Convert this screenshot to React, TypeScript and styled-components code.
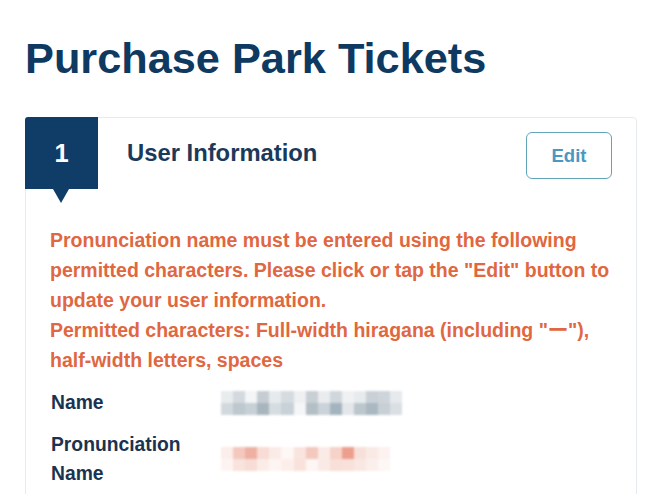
import React from "react";
import styled, { createGlobalStyle } from "styled-components";

const GlobalStyle = createGlobalStyle`
  html, body {
    margin: 0;
    padding: 0;
    background: #ffffff;
  }
  body {
    font-family: "Liberation Sans", Arial, sans-serif;
  }
`;

// blurred (pixelated) stand-ins for the hidden personal values
const nameCells = [
  ["#e8ecef", "#d3d9de", "#f3f5f6", "#c5cdd3", "#e6eaec", "#d5dbdf", "#eef0f2", "#c8cfd5", "#e9ecef", "#d0d7dc", "#eff1f3", "#e8ebee", "#c9d1d7", "#cdd4da", "#e6eaed"],
  ["#d2d9de", "#bdc8cf", "#c7d0d6", "#a9b5bd", "#d6dde1", "#c8d1d7", "#f4f6f7", "#b3bec5", "#cad3d9", "#a4b4bf", "#e3e7ea", "#bcc6cd", "#aab8c2", "#c8d0d6", "#d9dfe3"],
];

const kanaCells = [
  ["#fbeeeb", "#f4c8bf", "#eeb0a3", "#f8dcd5", "#fbebe7", "#fdf7f5", "#f9e4df", "#f3c8be", "#fbebe7", "#f6d2c9", "#ec9f8d", "#f8e0da", "#faeae6", "#fcf2ef"],
  ["#fdf4f1", "#f9e3dd", "#f8ddd6", "#fbece8", "#fdf5f3", "#fcefeb", "#f9e2dc", "#fdf6f4", "#faeae5", "#f8dfd8", "#f8e1da", "#f9e7e2", "#fbefeb", "#fdf7f5"],
];

export default function App() {
  return (
    <Page>
      <GlobalStyle />
      <Title>Purchase Park Tickets</Title>
      <Card>
        <CardHeader>
          <StepBadge>1</StepBadge>
          <SectionTitle>User Information</SectionTitle>
          <EditButton type="button">Edit</EditButton>
        </CardHeader>
        <CardBody>
          <Warning>
            Pronunciation name must be entered using the following permitted
            characters. Please click or tap the "Edit" button to update your
            user information.
            <br />
            Permitted characters: Full-width hiragana (including "ー"),
            half-width letters, spaces
          </Warning>
          <InfoList>
            <InfoRow>
              <Label>Name</Label>
              <Mosaic $cols={15}>
                {nameCells.flat().map((c, i) => (
                  <Cell key={i} $color={c} />
                ))}
              </Mosaic>
            </InfoRow>
            <InfoRow>
              <Label>Pronunciation Name</Label>
              <Mosaic $cols={14}>
                {kanaCells.flat().map((c, i) => (
                  <Cell key={i} $color={c} />
                ))}
              </Mosaic>
            </InfoRow>
          </InfoList>
        </CardBody>
      </Card>
    </Page>
  );
}

const Page = styled.div`
  padding: 33px 22px 0 25px;
  width: 659px;
  box-sizing: border-box;
  height: 494px;
  overflow: hidden;
`;

const Title = styled.h1`
  margin: 0 0 34px;
  font-size: 43.3px;
  line-height: 50px;
  font-weight: 700;
  color: #0e3a62;
`;

const Card = styled.div`
  width: 612px;
  box-sizing: border-box;
  border: 1px solid #e8ebee;
  border-radius: 4px;
  background: #fff;
`;

const CardHeader = styled.div`
  display: flex;
  align-items: center;
  height: 72px;
  margin: -1px 0 0 -1px;
`;

const StepBadge = styled.div`
  position: relative;
  flex: 0 0 73px;
  height: 72px;
  display: flex;
  align-items: center;
  justify-content: center;
  background: #0f3d68;
  color: #fff;
  font-size: 25.5px;
  font-weight: 700;
  border-top-left-radius: 3px;

  &::after {
    content: "";
    position: absolute;
    left: 28px;
    top: 72px;
    border-left: 8.5px solid transparent;
    border-right: 8.5px solid transparent;
    border-top: 14px solid #0f3d68;
  }
`;

const SectionTitle = styled.h2`
  flex: 1;
  margin: 0 0 0 29px;
  font-size: 23.8px;
  font-weight: 700;
  color: #1b3a5b;
`;

const EditButton = styled.button`
  width: 86px;
  height: 47px;
  margin: 5px 24px 0 0;
  padding: 0;
  border: 1px solid #63a5b8;
  border-radius: 6px;
  background: #fff;
  color: #4a98c2;
  font-family: "Liberation Sans", Arial, sans-serif;
  font-size: 18.5px;
  font-weight: 700;
  cursor: pointer;
`;

const CardBody = styled.div`
  padding: 36px 24px 24px 24px;
`;

const Warning = styled.p`
  margin: 0;
  font-size: 19.5px;
  line-height: 30px;
  font-weight: 700;
  color: #e0673f;
`;

const InfoList = styled.div`
  display: flex;
  flex-direction: column;
  gap: 13px;
  margin-top: 13px;
`;

const InfoRow = styled.div`
  display: grid;
  grid-template-columns: 171px 1fr;
  align-items: center;
`;

const Label = styled.div`
  padding-left: 1px;
  font-size: 19.3px;
  line-height: 29px;
  font-weight: 700;
  color: #1a3350;
`;

const Mosaic = styled.div<{ $cols: number }>`
  display: grid;
  grid-template-columns: repeat(${(p) => p.$cols}, 12.1px);
  grid-auto-rows: 12px;
  filter: blur(0.8px);
`;

const Cell = styled.div<{ $color: string }>`
  background: ${(p) => p.$color};
`;
